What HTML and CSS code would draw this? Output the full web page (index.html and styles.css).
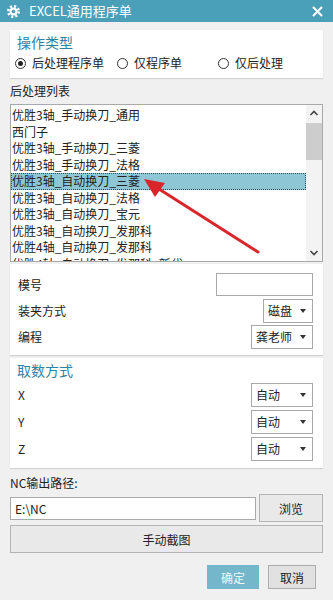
FILE: index.html
```html
<!DOCTYPE html>
<html lang="zh-CN">
  <head>
    <meta charset="UTF-8" />
    <meta name="viewport" content="width=device-width, initial-scale=1.0" />
    <title>EXCEL通用程序单</title>
    <link rel="stylesheet" href="styles.css">
  </head>
  <body>
    <div class="window">
      <div class="titlebar">
        <svg class="gear" width="13" height="13" viewBox="-6.5 -6.5 13 13">
          <circle r="5.2" fill="none" stroke="#fff" stroke-width="2.6" stroke-dasharray="2.04 2.04" />
          <circle r="4" fill="#fff" />
          <circle r="1.8" fill="#4ba0b9" />
        </svg>
        <span class="title">EXCEL通用程序单</span>
        <svg class="close" width="11" height="11" viewBox="0 0 11 11">
          <path d="M1 1L10 10M10 1L1 10" stroke="#fff" stroke-width="2" />
        </svg>
      </div>

      <div class="body">
        <section class="panel panel-type">
          <div class="panel-head">操作类型</div>
          <div class="radios">
            <label class="radio checked"><span class="dot"></span>后处理程序单</label>
            <label class="radio"><span class="dot"></span>仅程序单</label>
            <label class="radio"><span class="dot"></span>仅后处理</label>
          </div>
        </section>

        <div class="caption">后处理列表</div>
        <div class="listbox">
          <ul class="items">
            <li>优胜3轴_手动换刀_通用</li>
            <li>西门子</li>
            <li>优胜3轴_手动换刀_三菱</li>
            <li>优胜3轴_手动换刀_法格</li>
            <li class="selected">优胜3轴_自动换刀_三菱</li>
            <li>优胜3轴_自动换刀_法格</li>
            <li>优胜3轴_自动换刀_宝元</li>
            <li>优胜3轴_自动换刀_发那科</li>
            <li>优胜4轴_自动换刀_发那科</li>
            <li>优胜4轴_自动换刀_发那科_新代</li>
          </ul>
          <div class="scrollbar">
            <svg class="sb-btn" width="16" height="16" viewBox="0 0 16 16">
              <path d="M4.5 10L8 6.5L11.5 10" fill="none" stroke="#444" stroke-width="1.6" />
            </svg>
            <span class="sb-thumb"></span>
            <svg class="sb-btn sb-down" width="16" height="16" viewBox="0 0 16 16">
              <path d="M4.5 6L8 9.5L11.5 6" fill="none" stroke="#444" stroke-width="1.6" />
            </svg>
          </div>
        </div>

        <section class="panel panel-info">
          <div class="row">
            <span>模号</span>
            <div class="textbox short"></div>
          </div>
          <div class="row">
            <span>装夹方式</span>
            <div class="select small">磁盘<i class="caret"></i></div>
          </div>
          <div class="row">
            <span>编程</span>
            <div class="select">龚老师<i class="caret"></i></div>
          </div>
        </section>

        <section class="panel panel-axis">
          <div class="panel-head">取数方式</div>
          <div class="row">
            <span>X</span>
            <div class="select">自动<i class="caret"></i></div>
          </div>
          <div class="row">
            <span>Y</span>
            <div class="select">自动<i class="caret"></i></div>
          </div>
          <div class="row">
            <span>Z</span>
            <div class="select">自动<i class="caret"></i></div>
          </div>
        </section>

        <div class="caption nc">NC输出路径:</div>
        <div class="path-row">
          <div class="textbox path">E:\NC</div>
          <button class="btn browse">浏览</button>
        </div>
        <button class="btn wide">手动截图</button>

        <div class="actions">
          <button class="btn primary">确定</button>
          <button class="btn cancel">取消</button>
        </div>
      </div>

      <!-- 标注箭头 -->
      <svg class="arrow" width="333" height="600" viewBox="0 0 333 600">
        <line x1="258" y1="252" x2="159" y2="189" stroke="#d9262b" stroke-width="3" stroke-linecap="round" />
        <polygon points="144,179 165,183 155,197" fill="#d9262b" />
      </svg>
    </div>
  </body>
</html>
```

FILE: styles.css
```css
* {
  margin: 0;
  padding: 0;
  box-sizing: border-box;
}
body {
  width: 333px;
  height: 600px;
  background: #f0f0f0;
  font-family: "Noto Sans CJK SC", "Noto Sans", sans-serif;
  font-size: 12px;
  color: #222;
  overflow: hidden;
}
.window {
  position: relative;
  height: 600px;
}
.titlebar {
  height: 22px;
  background: #4ba0b9;
  display: flex;
  align-items: center;
  padding: 0 10px 0 7px;
  color: #fff;
  .gear {
    margin-right: 9px;
  }
  .title {
    flex: 1;
    font-size: 13px;
    line-height: 22px;
  }
}
.body {
  padding: 8px 10px 0;
}
.panel {
  background: #fff;
  box-shadow: 0 1px 1px rgba(0, 0, 0, 0.12);
}
.panel-head {
  font-size: 14px;
  line-height: 18px;
  color: #2f82a3;
  padding-left: 7px;
}
.panel-type {
  padding: 3px 0 7px;
}
.radios {
  margin-top: 4px;
  display: grid;
  grid-template-columns: 102px 101px 1fr;
  padding-left: 5px;
  line-height: 16px;
}
.radio {
  display: flex;
  align-items: center;
  .dot {
    width: 11px;
    height: 11px;
    border: 1px solid #333;
    border-radius: 50%;
    margin-right: 6px;
    display: flex;
    align-items: center;
    justify-content: center;
  }
}
.radio.checked .dot::after {
  content: "";
  width: 5px;
  height: 5px;
  border-radius: 50%;
  background: #222;
}
.caption {
  line-height: 16px;
  margin-top: 5px;
}
.listbox {
  margin-top: 5px;
  height: 158px;
  background: #fff;
  border: 1px solid #a9a9a9;
  display: flex;
  overflow: hidden;
}
.items {
  flex: 1;
  list-style: none;
  padding-top: 2px;
  li {
    height: 16.5px;
    line-height: 16.5px;
    padding-left: 1px;
    white-space: nowrap;
    user-select: none;
  }
  .selected {
    background: #8ec6d6;
    outline: 1px dotted #2d4f59;
    outline-offset: -1px;
  }
}
.scrollbar {
  width: 16px;
  background: #f3f3f3;
  display: flex;
  flex-direction: column;
  .sb-btn {
    display: block;
    flex: none;
  }
  .sb-thumb {
    margin-top: 2px;
    height: 37px;
    background: #cdcdcd;
  }
  .sb-down {
    margin-top: auto;
  }
}
.panel-info {
  margin-top: 2px;
  padding: 8px 10px 6px 8px;
  display: flex;
  flex-direction: column;
  gap: 1px;
}
.panel-axis {
  margin-top: 3px;
  padding: 3px 10px 7px 0;
  .panel-head {
    margin-bottom: 3px;
  }
  .row {
    padding-left: 8px;
  }
  .row + .row {
    margin-top: 2px;
  }
}
.row {
  height: 25px;
  display: flex;
  align-items: center;
  justify-content: space-between;
}
.textbox {
  background: #fff;
  border: 1px solid #a9a9a9;
  height: 23px;
  line-height: 21px;
}
.textbox.short {
  width: 97px;
}
.select {
  width: 62px;
  height: 24px;
  border: 1px solid #a9a9a9;
  background: #fff;
  display: flex;
  align-items: center;
  justify-content: space-between;
  padding: 0 6px 0 4px;
  line-height: 22px;
}
.select.small {
  width: 50px;
}
.caret {
  width: 0;
  height: 0;
  border-left: 3.5px solid transparent;
  border-right: 3.5px solid transparent;
  border-top: 4px solid #333;
}
.caption.nc {
  margin-top: 7px;
}
.path-row {
  margin-top: 3px;
  display: flex;
  align-items: center;
  gap: 3px;
  .path {
    flex: 1;
    padding-left: 4px;
  }
}
.btn {
  font-family: inherit;
  font-size: 12px;
  color: #222;
  background: #e9e9e9;
  border: 1px solid #b4b4b4;
  height: 28px;
}
.browse {
  width: 64px;
}
.wide {
  display: block;
  width: 100%;
  margin-top: 3px;
}
.actions {
  margin-top: 12px;
  display: flex;
  justify-content: flex-end;
  gap: 9px;
  padding-right: 7px;
  .btn {
    height: 24px;
  }
  .primary {
    width: 52px;
    background: #74b6ca;
    border-color: #74b6ca;
    color: #eef7fa;
  }
  .cancel {
    width: 48px;
    background: #e1e1e1;
    border-color: #adadad;
  }
}
.arrow {
  position: absolute;
  left: 0;
  top: 0;
  pointer-events: none;
}
```
